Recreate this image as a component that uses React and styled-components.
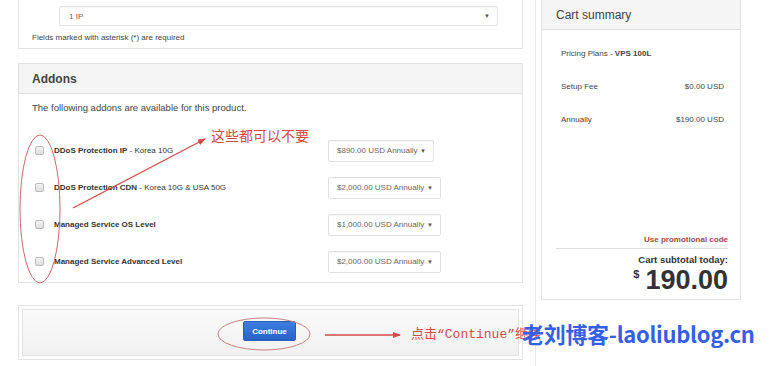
import React from "react"
import styled, { createGlobalStyle } from "styled-components"

const GlobalStyle = createGlobalStyle`
  html, body {
    margin: 0;
    padding: 0;
    background: #fff;
  }
  body {
    font-family: "Liberation Sans", Arial, sans-serif;
    color: #333;
    width: 780px;
    height: 366px;
    overflow: hidden;
  }
`

const Page = styled.div`
  position: relative;
  width: 780px;
  height: 366px;
  display: flex;
  padding-left: 18px;
  box-sizing: border-box;
`

const LeftCol = styled.div`
  width: 505px;
  display: flex;
  flex-direction: column;
`

const Divider = styled.div`
  width: 1px;
  margin-left: 12px;
  background: #ececec;
`

const RightCol = styled.div`
  width: 200px;
  margin-left: 5px;
`

const Panel = styled.div`
  border: 1px solid #e2e2e2;
  border-top: ${p => (p.cut ? "none" : "1px solid #e2e2e2")};
  background: #fff;
  box-sizing: border-box;
`

const TopPanel = styled(Panel)`
  height: 49px;
  padding: 6px 24px 0 40px;
`

const Select = styled.div`
  height: ${p => p.h || 20}px;
  width: ${p => (p.w ? p.w + "px" : "auto")};
  box-sizing: border-box;
  border: 1px solid #e0e0e0;
  border-radius: 2px;
  background: #fff;
  display: flex;
  align-items: center;
  justify-content: space-between;
  padding: 0 7px 0 ${p => p.pl || 9}px;
  font-size: 8px;
  color: #666;
  box-shadow: inset 0 1px 1px rgba(0, 0, 0, 0.03);
`

const Caret = styled.span`
  font-size: 6px;
  color: #555;
`

const Note = styled.div`
  font-size: 8px;
  color: #444;
  margin: 7px 0 0 -27px;
`

const AddonsPanel = styled(Panel)`
  margin-top: 14px;
  height: 220px;
`

const PanelHeader = styled.div`
  height: 29px;
  background: #f5f5f5;
  border-bottom: 1px solid #e0e0e0;
  display: flex;
  align-items: center;
  padding-left: ${p => p.pl || 13}px;
  font-size: ${p => p.fs || 12}px;
  font-weight: ${p => p.fw || 600};
  color: #444;
`

const Intro = styled.div`
  font-size: 9.5px;
  color: #444;
  padding: 8px 0 0 13px;
  height: 27px;
  box-sizing: border-box;
`

const Rows = styled.div`
  padding-top: 11px;
`

const Row = styled.div`
  height: 37px;
  display: flex;
  align-items: center;
`

const Check = styled.span`
  width: 9px;
  height: 9px;
  margin-left: 16px;
  border: 1px solid #bbb;
  border-radius: 2px;
  background: linear-gradient(#f4f4f4, #dedede);
  box-sizing: border-box;
`

const Label = styled.div`
  width: 274px;
  margin-left: 10px;
  font-size: 8px;
  color: #333;
  b {
    font-weight: 700;
  }
`

const BottomPanel = styled(Panel)`
  margin-top: 22px;
  height: 55px;
  padding: 3px;
`

const BottomInner = styled.div`
  height: 100%;
  border: 1px solid #e2e2e2;
  box-sizing: border-box;
  background: linear-gradient(#fafafa, #f1f1f1);
  display: flex;
  align-items: center;
  justify-content: center;
`

const Button = styled.button`
  width: 53px;
  height: 20px;
  border: 1px solid #2a5db8;
  border-radius: 2px;
  background: linear-gradient(#3d7fe0, #2862c9);
  color: #fff;
  font-family: "Liberation Sans", Arial, sans-serif;
  font-size: 8px;
  font-weight: 700;
  padding: 0;
  margin-top: -3px;
  margin-left: -2px;
`

const Summary = styled(Panel)`
  height: 300px;
  display: flex;
  flex-direction: column;
`

const SummaryBody = styled.div`
  flex: 1;
  display: flex;
  flex-direction: column;
  padding: 0 12px 0 14px;
`

const Line = styled.div`
  height: 33px;
  display: flex;
  align-items: center;
  justify-content: space-between;
  font-size: 8px;
  color: #444;
  padding: 0 4px 0 5px;
  &:first-child {
    margin-top: 7px;
  }
  b {
    font-weight: 700;
  }
`

const Spacer = styled.div`
  flex: 1;
`

const Promo = styled.div`
  text-align: right;
  font-size: 8px;
  font-weight: 700;
  color: #9b4b4b;
  padding-bottom: 4px;
  border-bottom: 1px solid #ddd;
`

const Subtotal = styled.div`
  text-align: right;
  font-size: 9.5px;
  font-weight: 700;
  color: #333;
  margin-top: 5px;
  line-height: 11px;
`

const Total = styled.div`
  display: flex;
  justify-content: flex-end;
  align-items: flex-start;
  font-weight: 700;
  color: #333;
  height: 34px;
`

const Dollar = styled.span`
  font-size: 11px;
  margin: 3px 6px 0 0;
`

const Amount = styled.span`
  font-size: 27px;
  line-height: 30px;
`

const Overlay = styled.svg`
  position: absolute;
  left: 0;
  top: 0;
  pointer-events: none;
`

const Annotation = styled.div`
  position: absolute;
  left: ${p => p.x}px;
  top: ${p => p.y}px;
  color: ${p => p.color || "#d24a45"};
  font-size: ${p => p.fs}px;
  font-family: ${p => p.mono ? '"Liberation Mono", "Noto Sans CJK SC", monospace' : '"Noto Sans CJK SC", serif'};
  white-space: nowrap;
  line-height: 1;
`

const Watermark = styled.div`
  position: absolute;
  left: 522px;
  top: 320px;
  color: #3560e6;
  font-size: 22px;
  font-weight: 700;
  font-family: "Noto Sans CJK SC", "Noto Sans", sans-serif;
  line-height: 26px;
  letter-spacing: -0.3px;
  white-space: nowrap;
`

const addons = [
  { name: "DDoS Protection IP", extra: " - Korea 10G", price: "$890.00 USD Annually", w: 106 },
  { name: "DDoS Protection CDN", extra: " - Korea 10G & USA 50G", price: "$2,000.00 USD Annually", w: 113 },
  { name: "Managed Service OS Level", extra: "", price: "$1,000.00 USD Annually", w: 113 },
  { name: "Managed Service Advanced Level", extra: "", price: "$2,000.00 USD Annually", w: 113 },
]

export default function App() {
  return (
    <>
      <GlobalStyle />
      <Page>
        <LeftCol>
          <TopPanel cut>
            <Select>
              <span>1 IP</span>
              <Caret>▼</Caret>
            </Select>
            <Note>Fields marked with asterisk (*) are required</Note>
          </TopPanel>

          <AddonsPanel>
            <PanelHeader>Addons</PanelHeader>
            <Intro>The following addons are available for this product.</Intro>
            <Rows>
              {addons.map(a => (
                <Row key={a.name}>
                  <Check />
                  <Label>
                    <b>{a.name}</b>
                    {a.extra}
                  </Label>
                  <Select w={a.w} h={22} pl={8}>
                    <span>{a.price}</span>
                    <Caret>▼</Caret>
                  </Select>
                </Row>
              ))}
            </Rows>
          </AddonsPanel>

          <BottomPanel>
            <BottomInner>
              <Button>Continue</Button>
            </BottomInner>
          </BottomPanel>
        </LeftCol>

        <Divider />

        <RightCol>
          <Summary cut>
            <PanelHeader pl={14} fs={12} fw={400}>Cart summary</PanelHeader>
            <SummaryBody>
              <Line>
                <span>
                  Pricing Plans - <b>VPS 100L</b>
                </span>
              </Line>
              <Line>
                <span>Setup Fee</span>
                <span>$0.00 USD</span>
              </Line>
              <Line>
                <span>Annually</span>
                <span>$190.00 USD</span>
              </Line>
              <Spacer />
              <Promo>Use promotional code</Promo>
              <Subtotal>Cart subtotal today:</Subtotal>
              <Total>
                <Dollar>$</Dollar>
                <Amount>190.00</Amount>
              </Total>
            </SummaryBody>
          </Summary>
        </RightCol>

        <Overlay width="780" height="366" viewBox="0 0 780 366">
          <defs>
            <marker id="head" markerWidth="8" markerHeight="6" refX="7" refY="3" orient="auto" markerUnits="userSpaceOnUse">
              <path d="M0 0 L8 3 L0 6 Z" fill="#d24a45" />
            </marker>
          </defs>
          <ellipse cx="40" cy="209" rx="20" ry="74" fill="none" stroke="#c96a6a" strokeWidth="1" />
          <line x1="73" y1="208" x2="205" y2="139" stroke="#d24a45" strokeWidth="1.3" markerEnd="url(#head)" />
          <ellipse cx="264" cy="334" rx="46" ry="16" fill="none" stroke="#c98080" strokeWidth="1" />
          <line x1="325" y1="335" x2="400" y2="335" stroke="#d24a45" strokeWidth="1.3" markerEnd="url(#head)" />
        </Overlay>

        <Annotation x={211} y={128} fs={14}>这些都可以不要</Annotation>
        <Annotation x={411} y={328} fs={13} mono>点击“Continue”继续</Annotation>
        <Watermark>老刘博客-laoliublog.cn</Watermark>
      </Page>
    </>
  )
}
